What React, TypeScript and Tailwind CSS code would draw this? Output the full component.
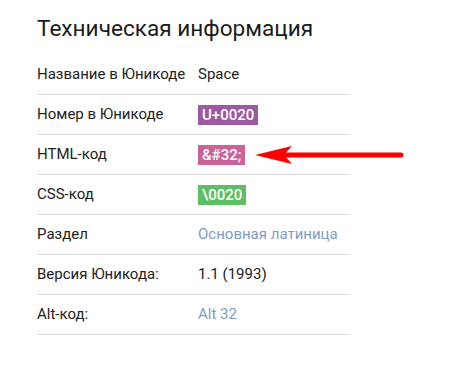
const rows: { label: string; value: React.ReactNode }[] = [
  { label: 'Название в Юникоде', value: <span>Space</span> },
  {
    label: 'Номер в Юникоде',
    value: <span className="bg-[#9d5aa0] text-white font-medium px-[4px] leading-[20px]">U+0020</span>,
  },
  {
    label: 'HTML-код',
    value: (
      <div className="flex items-center">
        <span className="bg-[#cb6299] text-white font-medium px-[4px] leading-[20px]">&amp;#32;</span>
        <svg className="ml-[10px]" width="150" height="20" viewBox="0 0 150 20" fill="none" xmlns="http://www.w3.org/2000/svg">
          <path d="M0 10 L37 1 L29 10 L37 19 Z" fill="#ff0000" />
          <path d="M28 10 H146" stroke="#ff0000" strokeWidth="5" strokeLinecap="round" />
        </svg>
      </div>
    ),
  },
  {
    label: 'CSS-код',
    value: <span className="bg-[#5cbf63] text-white font-medium px-[4px] leading-[20px]">\0020</span>,
  },
  { label: 'Раздел', value: <span className="text-[#7f9bc7]">Основная латиница</span> },
  { label: 'Версия Юникода:', value: <span>1.1 (1993)</span> },
  { label: 'Alt-код:', value: <span className="text-[#7f9bc7]">Alt 32</span> },
];

export default function App() {
  return (
    <div className="w-[464px] h-[390px] bg-white pl-[37px] pt-[12px] font-['Roboto',sans-serif] text-[#222]">
      <h2 className="text-[22.6px] leading-[33px] text-[#1c1c1c]">Техническая информация</h2>

      <div className="w-[313px] mt-[10px]">
        {rows.map((row, key) => (
          <div key={key} className="flex items-center h-[40px] border-b border-[#dcdcdc] text-[15px]">
            <div className="w-[161px] shrink-0">{row.label}</div>
            <div className="flex items-center">{row.value}</div>
          </div>
        ))}
      </div>
    </div>
  );
}
